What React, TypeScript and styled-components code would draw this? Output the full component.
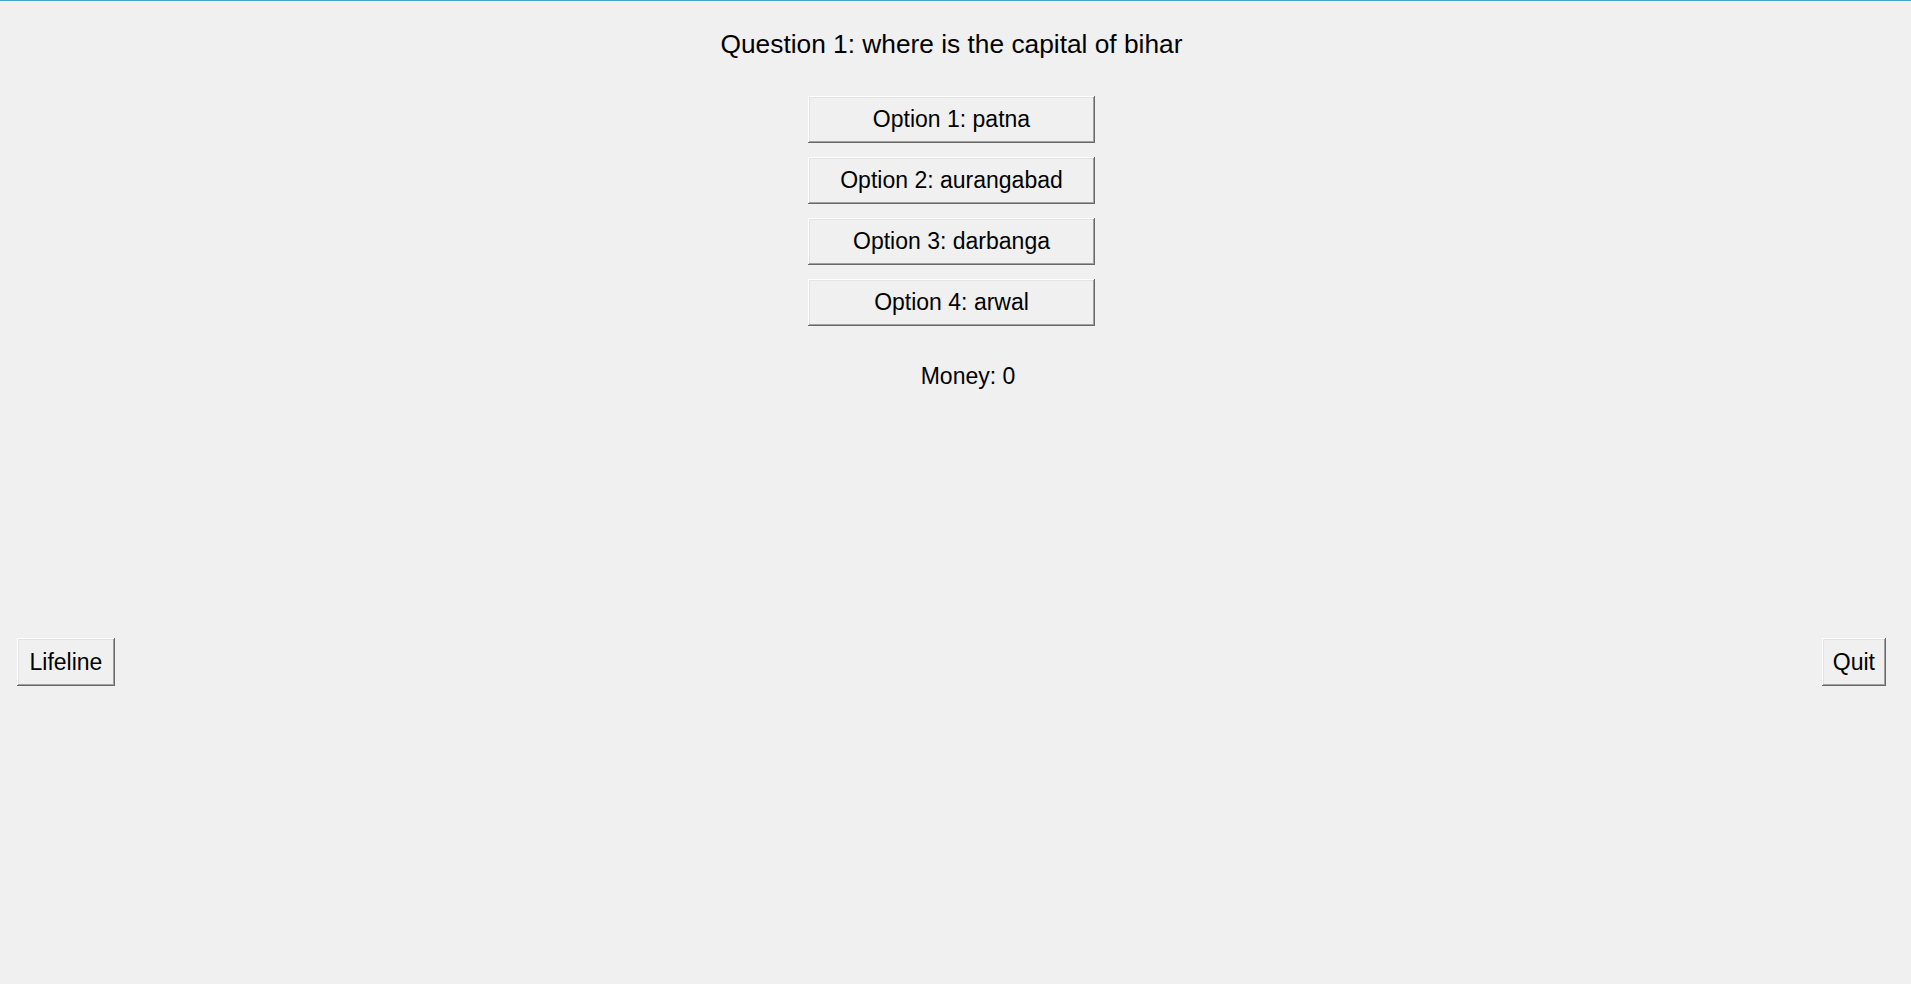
import { createGlobalStyle } from 'styled-components'
import styled from 'styled-components'

const GlobalStyle = createGlobalStyle`
  html, body {
    margin: 0;
    padding: 0;
    background: #f0f0f0;
  }
  body {
    font-family: "Liberation Sans", Arial, sans-serif;
    color: #000;
  }
`

const Window = styled.div`
  height: 984px;
  box-sizing: border-box;
  border-top: 1px solid #43a3c4;
  background: #f0f0f0;
  display: flex;
  flex-direction: column;
  overflow: hidden;
`

const Quiz = styled.div`
  display: flex;
  flex-direction: column;
  align-items: center;
  padding-right: 8px;
`

const Question = styled.h1`
  margin: 28px 0 0;
  font-size: 26.3px;
  line-height: 30px;
  font-weight: 400;
`

const Options = styled.div`
  display: flex;
  flex-direction: column;
  gap: 14px;
  margin-top: 37px;
`

const TkButton = styled.button<{ $padX?: number }>`
  font-family: "Liberation Sans", Arial, sans-serif;
  font-size: 23px;
  color: #000;
  background: #f0f0f0;
  border: none;
  border-radius: 0;
  height: 48px;
  padding: 0 ${p => p.$padX ?? 11}px;
  cursor: pointer;
  box-shadow:
    inset -1px -1px #696969,
    inset 1px 1px #ffffff,
    inset -2px -2px #a0a0a0,
    inset 2px 2px #e3e3e3;
  &:active {
    box-shadow: inset 1px 1px #696969, inset -1px -1px #ffffff;
  }
`

const OptionButton = styled(TkButton)`
  width: 287px;
  height: 47px;
`

const Money = styled.p`
  margin: 37px 0 0 33px;
  font-size: 23px;
  line-height: 27px;
`

const BottomBar = styled.div`
  display: flex;
  justify-content: space-between;
  margin-top: 248px;
  padding: 0 25px 0 17px;
`

const options = ['patna', 'aurangabad', 'darbanga', 'arwal']

export default function App() {
  return (
    <>
      <GlobalStyle />
      <Window>
        <Quiz>
          <Question>Question 1: where is the capital of bihar</Question>
          <Options>
            {options.map((opt, i) => (
              <OptionButton key={opt} type='button'>Option {i + 1}: {opt}</OptionButton>
            ))}
          </Options>
          <Money>Money: 0</Money>
        </Quiz>
        <BottomBar>
          <TkButton type='button' $padX={12.5}>Lifeline</TkButton>
          <TkButton type='button'>Quit</TkButton>
        </BottomBar>
      </Window>
    </>
  )
}
